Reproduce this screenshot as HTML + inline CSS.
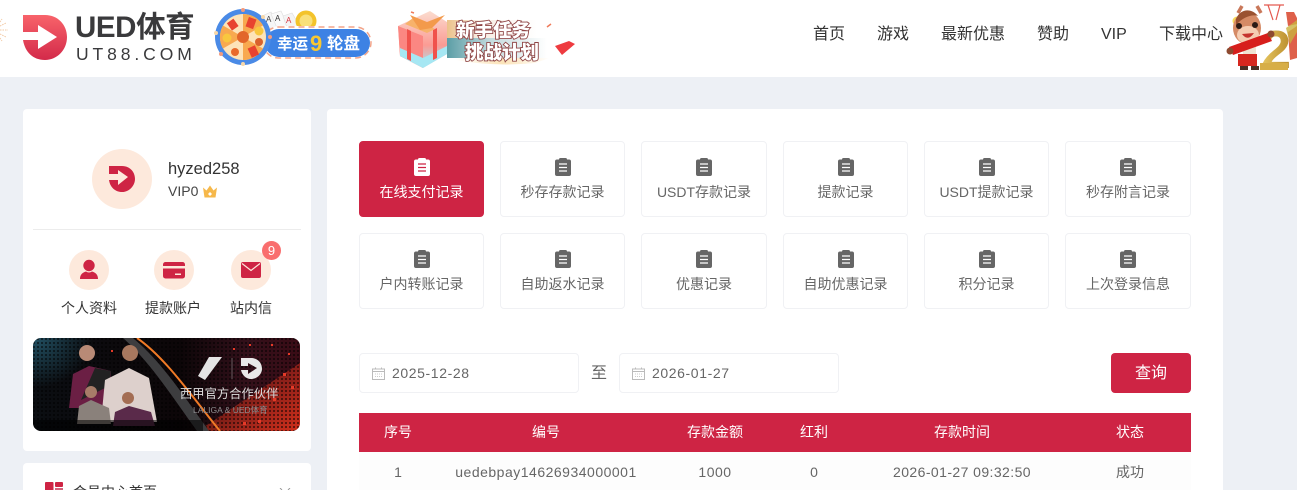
<!DOCTYPE html>
<html lang="zh"><head><meta charset="utf-8"><title>UED</title>
<style>
*{box-sizing:border-box;margin:0;padding:0}
html,body{width:1297px;height:490px;overflow:hidden;background:#edf0f5}
body{font-family:"Liberation Sans","Noto Sans CJK SC",sans-serif;font-size:14px;color:#333}
#w{position:relative;width:1297px;height:490px;overflow:hidden}
.a{position:absolute}
.t{position:absolute;white-space:nowrap;line-height:20px}
.btn{position:absolute;width:125px;height:76px;background:#fff;border:1px solid #f0f1f4;border-radius:4px;color:#666;text-align:center}
.btn svg{position:absolute;left:50%;margin-left:-9px;top:16px}
.btn span{position:absolute;left:0;right:0;top:40px;line-height:20px;white-space:nowrap}
.btn.on{background:#ce2444;border-color:#ce2444;color:#fff}
.date{position:absolute;top:353px;width:220px;height:40px;border:1px solid #f0f1f4;border-radius:4px;background:#fff;color:#666;line-height:38px;padding-left:32px;font-size:14px;letter-spacing:.6px}
.date svg{position:absolute;left:12px;top:13px}
.th{position:absolute;top:413px;line-height:39px;color:#fff;font-size:14px;transform:translateX(-50%);white-space:nowrap}
.td{position:absolute;top:462px;line-height:20px;color:#666;font-size:14px;transform:translateX(-50%);white-space:nowrap}
.circ{position:absolute;border-radius:50%;background:#fde9dc}
</style></head><body><div id="w">

<!-- header -->
<div class="a" style="left:0;top:0;width:1297px;height:77px;background:#fff"></div>
<svg class="a" style="left:0;top:18px" width="10" height="24" viewBox="0 0 10 24"><g stroke="#f2c9a4" stroke-width="1" stroke-dasharray="1.500 1"><path d="M0 12H8M0 8L6 5M0 16L6 19M0 4L2 1M0 20L2 23"/></g></svg>

<!-- logo -->
<svg class="a" style="left:23px;top:15px" width="44" height="45" viewBox="0 0 44 45">
<defs><linearGradient id="lg" x1="0" y1="0" x2="0" y2="1"><stop offset="0" stop-color="#f8636a"/><stop offset="1" stop-color="#d32a4a"/></linearGradient></defs>
<path fill="url(#lg)" d="M0 0H22C35 0 44 10 44 22C44 35 34 45 22 45C10 45 2 37 0 25H15V34L34 22L15 10V17H0Z"/>
</svg>
<div class="t" style="left:75px;top:10px;font-size:29.500px;line-height:36px;font-weight:700;color:#3a3a3c;letter-spacing:-.4px">UED体育</div>
<div class="t" style="left:76px;top:44px;font-size:17.500px;line-height:20px;color:#3a3a3c;letter-spacing:3.900px">UT88.COM</div>

<!-- wheel promo -->
<svg class="a" style="left:205px;top:0" width="180" height="75" viewBox="0 0 180 75">
<g stroke="#ddd" stroke-width=".6"><path d="M57 16L66 12L74 28H62Z" fill="#f6f6f6"/><path d="M66 14L76 11L84 28H72Z" fill="#fafafa"/><path d="M78 16L87 13L96 28H82Z" fill="#f4f4f4"/></g>
<text x="61" y="22" font-size="8" fill="#444">A</text><text x="70" y="21" font-size="8" fill="#333">A</text><text x="81" y="23" font-size="8" fill="#d8303c">A</text>
<circle cx="101" cy="21" r="10.500" fill="#f3c32b"/><circle cx="101" cy="21" r="6.500" fill="#f9e07a"/>
<rect x="58" y="26" width="108" height="33" rx="16.500" fill="#fff"/>
<rect x="58" y="27" width="108" height="31" rx="15.500" fill="none" stroke="#f2a48a" stroke-width="1.500" stroke-dasharray="6 4"/>
<rect x="60" y="29" width="105" height="28" rx="14" fill="#3d82e4"/>
<circle cx="38" cy="37" r="28" fill="#4a8ae6"/>
<circle cx="38" cy="37" r="23" fill="#fde3b8"/>
<path d="M38 37L38 14A23 23 0 0 1 58 25.500Z M38 37L58 48.500A23 23 0 0 1 38 60Z M38 37L18 48.500A23 23 0 0 1 18 25.500Z" fill="#f8a94f"/>
<rect x="24" y="20" width="8" height="9" fill="#e8432f" transform="rotate(-35 28 25)"/>
<rect x="42" y="18" width="8" height="10" fill="#e8432f" transform="rotate(20 46 23)"/>
<rect x="44" y="47" width="8" height="10" fill="#e8432f" transform="rotate(-25 47 51)"/>
<circle cx="22" cy="38" r="4.500" fill="#f8c73f"/><circle cx="54" cy="31" r="4.500" fill="#f8c73f"/><circle cx="54" cy="42" r="4" fill="#d9622c"/><circle cx="30" cy="52" r="4" fill="#e86a2b"/>
<circle cx="38" cy="37" r="6" fill="#e2662a"/>
<circle cx="11" cy="33" r="2" fill="#f6d7a9"/><circle cx="38" cy="10" r="2" fill="#f29b7e"/><circle cx="58" cy="17" r="2" fill="#f6d7a9"/><circle cx="65" cy="37" r="2" fill="#f29b7e"/><circle cx="16" cy="54" r="2" fill="#f29b7e"/><circle cx="38" cy="64" r="2" fill="#f6d7a9"/>
<text x="72" y="49" font-size="15.500" font-weight="700" fill="#fff" font-family="Noto Sans CJK SC,sans-serif">幸运</text>
<text x="105" y="51" font-size="22" font-weight="700" fill="#f8c731" font-family="Liberation Sans,sans-serif">9</text>
<text x="122" y="49" font-size="16.500" font-weight="700" fill="#fff" font-family="Noto Sans CJK SC,sans-serif">轮盘</text>
</svg>

<!-- task promo -->
<svg class="a" style="left:385px;top:0" width="200" height="75" viewBox="0 0 200 75">
<defs>
<linearGradient id="g1" x1="0" y1="0" x2="0" y2="1"><stop offset="0" stop-color="#fbdccf"/><stop offset=".6" stop-color="#fb9b94"/><stop offset="1" stop-color="#a6e7f3"/></linearGradient>
<linearGradient id="g2" x1="0" y1="0" x2="1" y2="0"><stop offset="0" stop-color="#5c9ea6"/><stop offset=".45" stop-color="#c6dcdf"/><stop offset="1" stop-color="#fff"/></linearGradient>
<linearGradient id="g4" x1="0" y1="0" x2="1" y2="0"><stop offset="0" stop-color="#ecc28a"/><stop offset=".35" stop-color="#f7ece2"/><stop offset="1" stop-color="#fff"/></linearGradient>
<linearGradient id="g3" x1="0" y1="0" x2="1" y2="0"><stop offset="0" stop-color="#fff"/><stop offset=".5" stop-color="#fbe3b8"/><stop offset="1" stop-color="#fff"/></linearGradient>
</defs>
<rect x="62" y="20" width="90" height="18" fill="url(#g4)"/>
<rect x="62" y="38" width="100" height="20" fill="url(#g2)"/>
<path d="M70 58H165L150 63Q110 67 70 60Z" fill="url(#g3)"/>
<path d="M13 26L45 11L62 22V54L38 68L15 56Z" fill="url(#g1)"/>
<path d="M13 26L38 36V68L15 56Z" fill="#fb8782"/>
<path d="M15 48L38 58V68L15 56ZM38 58L62 46V54L38 68Z" fill="#a6e7f3"/>
<path d="M22 29L26 31V61L22 59ZM48 30L52 28V58L48 60Z" fill="#f0524c"/>
<path d="M20 24L42 33L50 29L28 18Z" fill="#f7b26a"/><path d="M35 30L25 15L42 22L60 15L47 28Z" fill="#f39a4b"/>
<text x="71" y="37" font-size="18.500" font-weight="900" fill="#fff" stroke="#8f4545" stroke-width="1.800" paint-order="stroke" font-family="Noto Sans CJK SC,sans-serif">新手任务</text>
<text x="80" y="59" font-size="18.500" font-weight="900" fill="#fff" stroke="#8f4545" stroke-width="1.800" paint-order="stroke" font-family="Noto Sans CJK SC,sans-serif">挑战计划</text>
<path d="M170 46L184 41L190 44L177 55Z" fill="#ee3b40"/>
<path d="M162 27l4-3M26 12l3 1" stroke="#ef7a5a" stroke-width="1.500"/>
</svg>

<!-- nav -->
<div class="t" style="left:813px;top:25px;font-size:16px">首页</div>
<div class="t" style="left:877px;top:25px;font-size:16px">游戏</div>
<div class="t" style="left:941px;top:25px;font-size:16px">最新优惠</div>
<div class="t" style="left:1037px;top:25px;font-size:16px">赞助</div>
<div class="t" style="left:1101px;top:25px;font-size:16px">VIP</div>
<div class="t" style="left:1159px;top:25px;font-size:16px">下载中心</div>

<!-- mascot -->
<svg class="a" style="left:1224px;top:0" width="73" height="76" viewBox="0 0 73 76">
<defs><linearGradient id="gold" x1="0" y1="0" x2="1" y2="0"><stop offset="0" stop-color="#e8c862"/><stop offset="1" stop-color="#b98c2c"/></linearGradient></defs>
<path d="M40 5H60M44 5L49 20M56 5L52 20" stroke="#e45a50" stroke-width="1.200" fill="none"/>
<path d="M62 12H70L73 18V24L64 26ZM64 32L73 26V58L66 60Z" fill="#d8442a" opacity=".85"/>
<path d="M62 28L73 20V32L66 44Z" fill="#c9b23e" opacity=".8"/>
<text x="37" y="68" font-size="54" font-weight="700" fill="url(#gold)" font-family="Liberation Sans,sans-serif">2</text>
<rect x="36" y="63" width="28" height="7" fill="#d7ae47"/>
<circle cx="13" cy="21" r="4.500" fill="#f7d95b"/>
<path d="M18 6L14 13M33 6L37 13" stroke="#c9785a" stroke-width="3.500"/>
<ellipse cx="23" cy="28" rx="14" ry="16" fill="#d58b66"/>
<ellipse cx="24" cy="35" rx="11" ry="9" fill="#f5cdb2"/>
<path d="M12 19C17 7 29 9 34 16C28 14 19 17 12 25Z" fill="#9a5230"/>
<circle cx="15" cy="26" r="3" fill="#2a1a15"/><circle cx="31" cy="25" r="3" fill="#2a1a15"/>
<path d="M18 34Q24 42 30 33Z" fill="#c5342e"/>
<path d="M14 54H33V66H14Z" fill="#d6271f"/><path d="M19 44H32V54H19Z" fill="#efe3d2"/>
<path d="M16 66H24V70H16ZM27 66H35V70H27Z" fill="#4a2f25"/>
<path d="M5 47L44 33L48 41L9 55Z" fill="#d71f1c"/>
<circle cx="47" cy="34" r="3.500" fill="#8d4a30"/><circle cx="6" cy="51" r="3.500" fill="#8d4a30"/>
</svg>

<!-- left card -->
<div class="a" style="left:23px;top:109px;width:288px;height:342px;background:#fff;border-radius:4px"></div>
<div class="circ" style="left:92px;top:149px;width:60px;height:60px"></div>
<svg class="a" style="left:109px;top:166px" width="26" height="26" viewBox="0 0 26 26"><path fill="#ce2444" d="M0 0H13C21 0 26 6 26 13C26 20 20 26 13 26C6 26 1 21 0 14H9V19L19 11L9 4V8H0Z"/></svg>
<div class="t" style="left:168px;top:159px;font-size:16.500px;color:#333">hyzed258</div>
<div class="t" style="left:168px;top:181px;font-size:14px;color:#444">VIP0</div>
<svg class="a" style="left:202px;top:185px" width="16" height="13" viewBox="0 0 16 13"><path fill="#f6b84a" d="M1 2.500L4.500 5.500L8 .5L11.500 5.500L15 2.500L13.500 12.500H2.500Z"/><path fill="#fff" d="M8 7l2 2-2 2-2-2z"/></svg>
<div class="a" style="left:33px;top:229px;width:268px;height:1px;background:#ececec"></div>

<div class="circ" style="left:69px;top:250px;width:40px;height:40px"></div>
<div class="circ" style="left:154px;top:250px;width:40px;height:40px"></div>
<div class="circ" style="left:231px;top:250px;width:40px;height:40px"></div>
<svg class="a" style="left:79px;top:259px" width="20" height="21" viewBox="0 0 20 21"><circle cx="10" cy="6.500" r="5.700" fill="#ce2444"/><path fill="#ce2444" d="M1 20C1 15 4 13.500 7 12.500Q10 14.500 13 12.500C16 13.500 19 15 19 20Z"/></svg>
<svg class="a" style="left:163px;top:262px" width="22" height="17" viewBox="0 0 22 17"><rect width="22" height="16.500" rx="2.500" fill="#ce2444"/><rect y="4" width="22" height="2.500" fill="#fde9dc"/><rect x="12" y="11.500" width="6" height="1.500" fill="#fde9dc"/></svg>
<svg class="a" style="left:241px;top:262px" width="20" height="16" viewBox="0 0 20 16"><rect width="20" height="16" rx="2" fill="#ce2444"/><path d="M1 1.500L10 8.500L19 1.500" fill="none" stroke="#fde9dc" stroke-width="1.200"/></svg>
<div class="a" style="left:262px;top:241px;width:19px;height:19px;border-radius:50%;background:#f96e6e;color:#fff;font-size:13px;line-height:19px;text-align:center">9</div>
<div class="t" style="left:61px;top:298px;font-size:14px;color:#333">个人资料</div>
<div class="t" style="left:145px;top:298px;font-size:14px;color:#333">提款账户</div>
<div class="t" style="left:230px;top:298px;font-size:14px;color:#333">站内信</div>

<!-- banner -->
<svg class="a" style="left:33px;top:338px;border-radius:8px" width="267" height="93" viewBox="0 0 267 93">
<defs>
<linearGradient id="b1" x1="0" y1="0" x2="1" y2="0"><stop offset="0" stop-color="#0b0e12"/><stop offset=".55" stop-color="#0c0608"/><stop offset=".8" stop-color="#33101a"/><stop offset="1" stop-color="#3a0c16"/></linearGradient>
<linearGradient id="b2" x1="0" y1="0" x2="1" y2="1"><stop offset="0" stop-color="#e8341c" stop-opacity="0"/><stop offset="1" stop-color="#e0331c" stop-opacity=".9"/></linearGradient>
<radialGradient id="b3" cx="0" cy="0" r="1"><stop offset="0" stop-color="#2c6f88" stop-opacity=".7"/><stop offset="1" stop-color="#2c6f88" stop-opacity="0"/></radialGradient>
<pattern id="dots" width="4" height="4" patternUnits="userSpaceOnUse"><rect width="2" height="2" fill="#000" opacity=".5"/></pattern>
</defs>
<rect width="267" height="93" fill="url(#b1)"/>
<rect width="60" height="50" fill="url(#b3)"/>
<path d="M165 93L267 25V93Z" fill="url(#b2)"/>
<rect width="267" height="93" fill="url(#dots)"/>
<path d="M90 0H100C130 25 152 60 176 93H164C140 60 118 25 90 0Z" fill="#3d3d3f"/>
<path d="M104 0C133 20 160 60 187 93" stroke="#f07a26" stroke-width="2" fill="none"/>
<circle cx="54" cy="15" r="8" fill="#b88a76"/><path d="M36 70L40 36L56 28L78 33L76 70Z" fill="#6b1f44"/>
<path d="M62 30L78 33L76 48L48 62Z" fill="#222"/>
<circle cx="97" cy="15" r="8" fill="#a8785f"/><path d="M68 84L72 42L96 30L116 40L124 84Z" fill="#ddd0cc"/>
<circle cx="58" cy="54" r="6" fill="#a77c68"/><path d="M44 86L46 68L58 62L76 70L78 86Z" fill="#8a817b"/>
<circle cx="95" cy="60" r="6" fill="#a36d53"/><path d="M80 88L82 74L96 68L118 74L122 88Z" fill="#5a2a4a"/>
<rect x="0" y="82" width="170" height="11" fill="#000" opacity=".55"/>
<path d="M176 19L189 19L172 42L165 38Z" fill="#e4e4e4"/>
<path d="M199 20V41" stroke="#777" stroke-width=".7"/>
<path fill="#e8e8e8" d="M208 20H218C225 20 229 25 229 31C229 36 224 41 218 41C213 41 209 37 208 32H215V36L224 30L215 25V28H208Z"/>
<text x="147" y="60" font-size="12.300" fill="#ddd" font-family="Noto Sans CJK SC,sans-serif">西甲官方合作伙伴</text>
<text x="160" y="75" font-size="8.500" fill="#8e8e90" font-family="Liberation Sans,Noto Sans CJK SC,sans-serif">LALIGA &amp; UED体育</text>
<g fill="#e53a28"><rect x="200" y="10" width="2" height="2"/><rect x="216" y="6" width="2" height="2"/><rect x="238" y="6" width="2" height="2"/><rect x="255" y="15" width="2" height="2"/><rect x="250" y="35" width="3" height="3"/><rect x="258" y="48" width="3" height="3"/><rect x="240" y="60" width="3" height="3"/><rect x="225" y="82" width="3" height="3"/><rect x="210" y="84" width="3" height="3"/><rect x="78" y="12" width="2" height="2"/></g>
</svg>

<!-- second card (cut off by the viewport) -->
<div class="a" style="left:23px;top:463px;width:288px;height:27px;background:#fff;border-radius:4px 4px 0 0;overflow:hidden">
<svg class="a" style="left:22px;top:19px" width="18" height="8" viewBox="0 0 18 8"><rect width="8.500" height="18" rx="1" fill="#ce2444"/><rect x="10" width="8" height="5" rx="1" fill="#ce2444"/><rect x="10" y="6" width="8" height="6" fill="#d4607a"/></svg>
<div class="a" style="left:50px;top:19px;width:120px;height:8px;overflow:hidden;font-size:14px;line-height:20px;color:#333;white-space:nowrap">会员中心首页</div>
<svg class="a" style="left:256px;top:25px" width="12" height="2" viewBox="0 0 12 2"><path d="M1 0L3 2M11 0L9 2" stroke="#999" fill="none"/></svg>
</div>

<!-- main card -->
<div class="a" style="left:327px;top:109px;width:896px;height:381px;background:#fff;border-radius:4px 4px 0 0"></div>

<svg width="0" height="0" style="position:absolute"><defs>
<symbol id="clip" viewBox="0 0 18 18"><path d="M3 1.500H5V1.500Q5 0 6.500 0H11.500Q13 0 13 1.500H15Q17 1.500 17 3.500V16Q17 18 15 18H3Q1 18 1 16V3.500Q1 1.500 3 1.500Z"/></symbol>
</defs></svg>

<div class="btn on" style="left:359px;top:141px"><svg width="18" height="18" style="fill:#fff"><use href="#clip"/><path d="M5 6H13M5 9.500H13M5 13H13" stroke="#ce2444" stroke-width="1.300"/></svg><span>在线支付记录</span></div>
<div class="btn" style="left:500px;top:141px"><svg width="18" height="18" style="fill:#666"><use href="#clip"/><path d="M5 6H13M5 9.500H13M5 13H13" stroke="#fff" stroke-width="1.300"/></svg><span>秒存存款记录</span></div>
<div class="btn" style="left:641px;top:141px;width:126px"><svg width="18" height="18" style="fill:#666"><use href="#clip"/><path d="M5 6H13M5 9.500H13M5 13H13" stroke="#fff" stroke-width="1.300"/></svg><span>USDT存款记录</span></div>
<div class="btn" style="left:783px;top:141px"><svg width="18" height="18" style="fill:#666"><use href="#clip"/><path d="M5 6H13M5 9.500H13M5 13H13" stroke="#fff" stroke-width="1.300"/></svg><span>提款记录</span></div>
<div class="btn" style="left:924px;top:141px"><svg width="18" height="18" style="fill:#666"><use href="#clip"/><path d="M5 6H13M5 9.500H13M5 13H13" stroke="#fff" stroke-width="1.300"/></svg><span>USDT提款记录</span></div>
<div class="btn" style="left:1065px;top:141px;width:126px"><svg width="18" height="18" style="fill:#666"><use href="#clip"/><path d="M5 6H13M5 9.500H13M5 13H13" stroke="#fff" stroke-width="1.300"/></svg><span>秒存附言记录</span></div>

<div class="btn" style="left:359px;top:233px"><svg width="18" height="18" style="fill:#666"><use href="#clip"/><path d="M5 6H13M5 9.500H13M5 13H13" stroke="#fff" stroke-width="1.300"/></svg><span>户内转账记录</span></div>
<div class="btn" style="left:500px;top:233px"><svg width="18" height="18" style="fill:#666"><use href="#clip"/><path d="M5 6H13M5 9.500H13M5 13H13" stroke="#fff" stroke-width="1.300"/></svg><span>自助返水记录</span></div>
<div class="btn" style="left:641px;top:233px;width:126px"><svg width="18" height="18" style="fill:#666"><use href="#clip"/><path d="M5 6H13M5 9.500H13M5 13H13" stroke="#fff" stroke-width="1.300"/></svg><span>优惠记录</span></div>
<div class="btn" style="left:783px;top:233px"><svg width="18" height="18" style="fill:#666"><use href="#clip"/><path d="M5 6H13M5 9.500H13M5 13H13" stroke="#fff" stroke-width="1.300"/></svg><span>自助优惠记录</span></div>
<div class="btn" style="left:924px;top:233px"><svg width="18" height="18" style="fill:#666"><use href="#clip"/><path d="M5 6H13M5 9.500H13M5 13H13" stroke="#fff" stroke-width="1.300"/></svg><span>积分记录</span></div>
<div class="btn" style="left:1065px;top:233px;width:126px"><svg width="18" height="18" style="fill:#666"><use href="#clip"/><path d="M5 6H13M5 9.500H13M5 13H13" stroke="#fff" stroke-width="1.300"/></svg><span>上次登录信息</span></div>

<!-- dates -->
<div class="date" style="left:359px"><svg width="13" height="13" viewBox="0 0 13 13"><path d="M.5 2H12.500V12.500H.5ZM.5 4.500H12.500M3.500 .5V2M9.500 .5V2" fill="none" stroke="#bbb"/><path d="M3 7H10M3 9.500H10" stroke="#ccc" stroke-dasharray="1 1"/></svg>2025-12-28</div>
<div class="t" style="left:591px;top:364px;font-size:16px;color:#666">至</div>
<div class="date" style="left:619px"><svg width="13" height="13" viewBox="0 0 13 13"><path d="M.5 2H12.500V12.500H.5ZM.5 4.500H12.500M3.500 .5V2M9.500 .5V2" fill="none" stroke="#bbb"/><path d="M3 7H10M3 9.500H10" stroke="#ccc" stroke-dasharray="1 1"/></svg>2026-01-27</div>
<div class="a" style="left:1111px;top:353px;width:80px;height:40px;background:#ce2444;border-radius:4px;color:#fff;font-size:16px;line-height:41px;text-align:center">查询</div>

<!-- table -->
<div class="a" style="left:359px;top:413px;width:832px;height:39px;background:#ce2444"></div>
<div class="a" style="left:359px;top:452px;width:832px;height:38px;background:#fdfdfd"></div>
<div class="th" style="left:398px">序号</div>
<div class="th" style="left:546px">编号</div>
<div class="th" style="left:715px">存款金额</div>
<div class="th" style="left:814px">红利</div>
<div class="th" style="left:962px">存款时间</div>
<div class="th" style="left:1130px">状态</div>
<div class="td" style="left:398px">1</div>
<div class="td" style="left:546px;letter-spacing:.5px">uedebpay14626934000001</div>
<div class="td" style="left:715px;letter-spacing:.5px">1000</div>
<div class="td" style="left:814px">0</div>
<div class="td" style="left:962px;letter-spacing:.42px">2026-01-27 09:32:50</div>
<div class="td" style="left:1130px">成功</div>
</div></body></html>
